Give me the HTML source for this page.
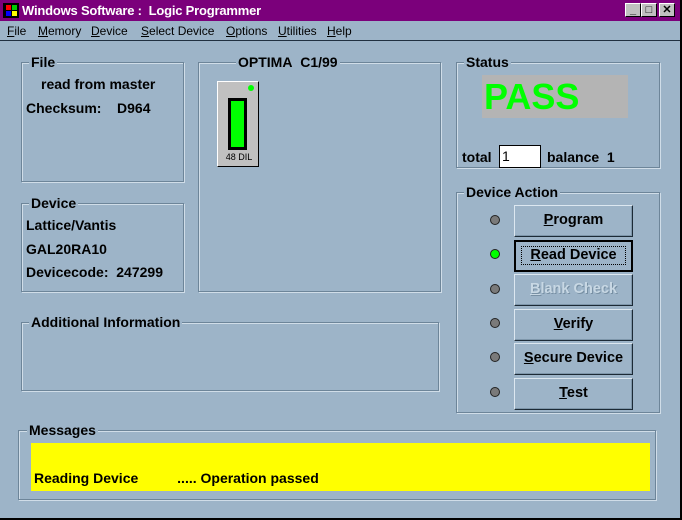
<!DOCTYPE html>
<html><head><style>
*{margin:0;padding:0;box-sizing:border-box}
body{width:682px;height:520px;background:#9db4c8;font-family:"Liberation Sans",Arial,sans-serif;font-size:14px;font-weight:bold;color:#000;position:relative;overflow:hidden}
.a{position:absolute}
.title{left:0;top:0;width:682px;height:21px;background:#7b007b;color:#fff;font-size:13px;line-height:21px;padding-left:22px;letter-spacing:-0.2px}
.menu{left:0;top:21px;width:682px;height:20px;border-bottom:1px solid #203040;font-weight:normal;font-size:12px;line-height:20px}
.menu span{position:absolute;top:0}
.g{position:absolute;border:1px solid #6d8599;box-shadow:1px 1px 0 #d0dde8 inset,1px 1px 0 #d0dde8}
.gt{position:absolute;top:-9px;background:#9db4c8;padding:0 2px;line-height:16px;font-size:14px}
.btn{position:absolute;left:514px;width:119px;height:32px;background:#9db4c8;border:1px solid;border-color:#dce7f0 #1c2a36 #1c2a36 #dce7f0;box-shadow:-1px -1px 0 #7e96aa inset;text-align:center;line-height:29px;font-size:14.5px}
.led{position:absolute;left:490px;width:10px;height:10px;border-radius:50%;background:#7a7a7a;border:1px solid #222}
.wb{position:absolute;top:3px;width:16px;height:14px;background:#c0c0c0;border:1px solid;border-color:#fff #000 #000 #fff;font-size:11px;line-height:12px;text-align:center;color:#000}
u{text-decoration:underline}
</style></head><body>
<div class="a title">Windows Software :&nbsp; Logic Programmer</div>
<div class="a" style="left:3px;top:3px;width:16px;height:15px;background:#000"><div class="a" style="left:3px;top:2px;width:5px;height:5px;background:#f00"></div><div class="a" style="left:9px;top:2px;width:5px;height:5px;background:#0c0"></div><div class="a" style="left:3px;top:8px;width:5px;height:5px;background:#00f"></div><div class="a" style="left:9px;top:8px;width:5px;height:5px;background:#ff0"></div></div>
<div class="wb" style="left:625px">_</div><div class="wb" style="left:641px">□</div><div class="wb" style="left:659px">✕</div>
<div class="a menu"><span style="left:7px"><u>F</u>ile</span><span style="left:38px"><u>M</u>emory</span><span style="left:91px"><u>D</u>evice</span><span style="left:141px"><u>S</u>elect Device</span><span style="left:226px"><u>O</u>ptions</span><span style="left:278px"><u>U</u>tilities</span><span style="left:327px"><u>H</u>elp</span></div>

<div class="g" style="left:21px;top:62px;width:163px;height:120px"><div class="gt" style="left:7px">File</div>
<div class="a" style="left:19px;top:13px">read from master</div><div class="a" style="left:4px;top:37px">Checksum:&nbsp;&nbsp;&nbsp; D964</div></div>
<div class="g" style="left:21px;top:203px;width:163px;height:89px"><div class="gt" style="left:7px">Device</div>
<div class="a" style="left:4px;top:13px">Lattice/Vantis</div><div class="a" style="left:4px;top:37px">GAL20RA10</div><div class="a" style="left:4px;top:60px">Devicecode:&nbsp; 247299</div></div>
<div class="g" style="left:198px;top:62px;width:243px;height:230px"><div class="gt" style="left:37px">OPTIMA&nbsp; C1/99</div>
<div class="a" style="left:18px;top:18px;width:42px;height:86px;background:#c0c0c0;border:1px solid;border-color:#fff #000 #000 #fff">
<div class="a" style="left:30px;top:3px;width:6px;height:6px;border-radius:50%;background:#0f0"></div>
<div class="a" style="left:10px;top:16px;width:19px;height:52px;background:#000"><div class="a" style="left:3px;top:3px;width:13px;height:46px;background:#00ff00"></div></div>
<div class="a" style="left:1px;top:70px;font-size:9px;font-weight:normal;width:40px;text-align:center">48 DIL</div></div></div>
<div class="g" style="left:21px;top:322px;width:418px;height:69px"><div class="gt" style="left:7px">Additional Information</div></div>

<div class="g" style="left:456px;top:62px;width:204px;height:106px"><div class="gt" style="left:7px">Status</div>
<div class="a" style="left:25px;top:12px;width:146px;height:43px;background:#b4b4b4;color:#00ff00;font-size:36px;line-height:43px;padding-left:2px">PASS</div>
<div class="a" style="left:5px;top:86px">total</div>
<div class="a" style="left:42px;top:82px;width:42px;height:23px;background:#fff;border:1px solid #000;font-weight:normal;font-size:14px;padding-left:2px;line-height:20px">1</div>
<div class="a" style="left:90px;top:86px">balance&nbsp; 1</div></div>

<div class="g" style="left:456px;top:192px;width:204px;height:221px"><div class="gt" style="left:7px">Device Action</div></div>
<div class="led" style="top:215px"></div><div class="btn" style="top:205px"><u>P</u>rogram</div>
<div class="led" style="top:249px;background:#00ff00"></div><div class="btn" style="top:240px;border:2px solid #000;box-shadow:none;line-height:26px"><span style="border:1px dotted #000;padding:0 8px 1px"><u>R</u>ead Device</span></div>
<div class="led" style="top:284px"></div><div class="btn" style="top:274px;color:#c8d8e4;text-shadow:1px 1px 0 #7890a4"><u>B</u>lank Check</div>
<div class="led" style="top:318px"></div><div class="btn" style="top:309px"><u>V</u>erify</div>
<div class="led" style="top:352px"></div><div class="btn" style="top:343px"><u>S</u>ecure Device</div>
<div class="led" style="top:387px"></div><div class="btn" style="top:378px"><u>T</u>est</div>

<div class="g" style="left:18px;top:430px;width:638px;height:70px"><div class="gt" style="left:8px">Messages</div>
<div class="a" style="left:12px;top:12px;width:619px;height:48px;background:#ffff00"><div class="a" style="left:3px;top:27px">Reading Device&nbsp;&nbsp;&nbsp;&nbsp;&nbsp;&nbsp;&nbsp;&nbsp;&nbsp; ..... Operation passed</div></div></div>
<div class="a" style="left:0;top:518px;width:682px;height:2px;background:#000"></div>
<div class="a" style="left:680px;top:0;width:2px;height:520px;background:#000"></div>
</body></html>
